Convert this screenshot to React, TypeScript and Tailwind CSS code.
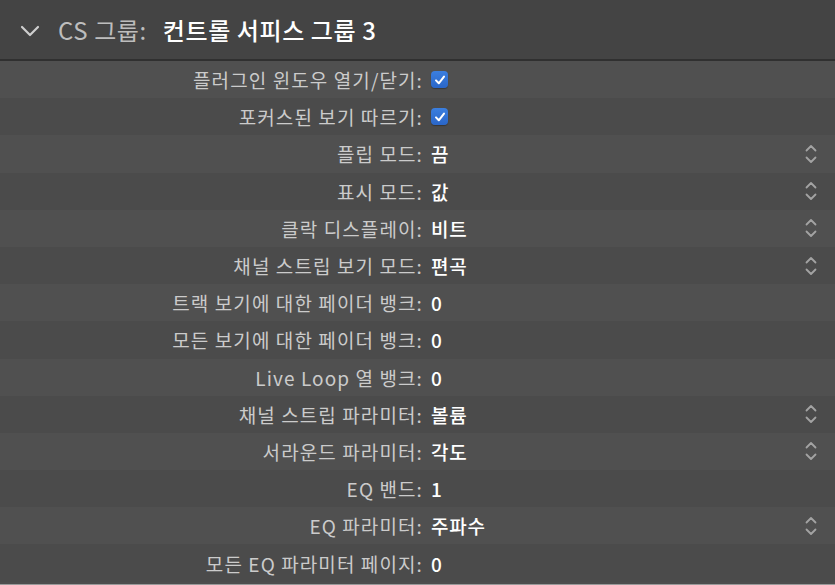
import React from "react";

type Row = { label: string; value?: string; check?: boolean; stepper?: boolean };

const rows: Row[] = [
  { label: "플러그인 윈도우 열기/닫기:", check: true },
  { label: "포커스된 보기 따르기:", check: true },
  { label: "플립 모드:", value: "끔", stepper: true },
  { label: "표시 모드:", value: "값", stepper: true },
  { label: "클락 디스플레이:", value: "비트", stepper: true },
  { label: "채널 스트립 보기 모드:", value: "편곡", stepper: true },
  { label: "트랙 보기에 대한 페이더 뱅크:", value: "0" },
  { label: "모든 보기에 대한 페이더 뱅크:", value: "0" },
  { label: "Live Loop 열 뱅크:", value: "0" },
  { label: "채널 스트립 파라미터:", value: "볼륨", stepper: true },
  { label: "서라운드 파라미터:", value: "각도", stepper: true },
  { label: "EQ 밴드:", value: "1" },
  { label: "EQ 파라미터:", value: "주파수", stepper: true },
  { label: "모든 EQ 파라미터 페이지:", value: "0" },
];

function Checkbox() {
  return (
    <div className="w-[17px] h-[17px] rounded-[4px] bg-gradient-to-b from-[#3b7fe0] to-[#2a66c8] flex items-center justify-center shadow-[0_1px_1px_rgba(0,0,0,0.3)]">
      <svg width="12" height="12" viewBox="0 0 12 12" fill="none">
        <path d="M2 6.4 L4.8 9.3 L10 2.6" stroke="white" strokeWidth="2" strokeLinecap="round" strokeLinejoin="round" />
      </svg>
    </div>
  );
}

function Stepper() {
  return (
    <svg width="14" height="22" viewBox="0 0 14 22" fill="none">
      <path d="M2.5 7.5 L7 3 L11.5 7.5" stroke="#a3a3a3" strokeWidth="1.8" strokeLinecap="round" strokeLinejoin="round" />
      <path d="M2.5 14.5 L7 19 L11.5 14.5" stroke="#a3a3a3" strokeWidth="1.8" strokeLinecap="round" strokeLinejoin="round" />
    </svg>
  );
}

export default function App() {
  return (
    <div
      className="w-[835px] h-[585px] overflow-hidden bg-[#4d4d4d] flex flex-col"
      style={{ fontFamily: '"Noto Sans CJK KR", "Noto Sans", sans-serif' }}
    >
      <div className="h-[61px] shrink-0 bg-[#444444] flex items-center pl-[20px] border-b-2 border-[#303030]">
        <svg width="20" height="12" viewBox="0 0 20 12" fill="none" className="mr-[18px] mt-[2px]">
          <path d="M2 2 L10 10 L18 2" stroke="#cfcfcf" strokeWidth="2.2" strokeLinecap="round" strokeLinejoin="round" />
        </svg>
        <span className="text-[24px] tracking-[0.6px] text-[#bdbdbd] leading-none">CS 그룹:</span>
        <span className="text-[24px] tracking-[0.6px] text-white leading-none ml-[16px] font-medium">컨트롤 서피스 그룹 3</span>
      </div>
      <div className="flex flex-col flex-1">
        {rows.map((r, i) => (
          <div
            key={i}
            className={`h-[37.2px] shrink-0 flex items-center ${i % 2 === 0 ? "bg-[#505050]" : "bg-[#4b4b4b]"}`}
          >
            <div className="w-[423px] shrink-0 text-right text-[19px] tracking-[1.1px] text-[#cbcbcb] leading-none">{r.label}</div>
            <div className="ml-[8px] flex-1 flex items-center">
              {r.check ? (
                <Checkbox />
              ) : (
                <span className="text-[19px] tracking-[0.8px] text-white font-medium leading-none">{r.value}</span>
              )}
            </div>
            {r.stepper && (
              <div className="mr-[17px] flex items-center">
                <Stepper />
              </div>
            )}
          </div>
        ))}
      </div>
      <div className="h-[1px] shrink-0 bg-[#9a9a9a]" />
    </div>
  );
}
